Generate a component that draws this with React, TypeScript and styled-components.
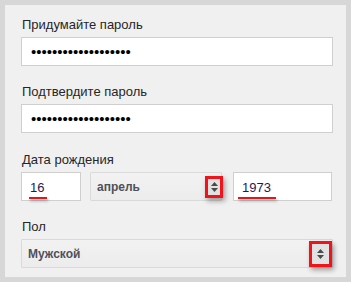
import * as React from "react";
import styled, { createGlobalStyle, css } from "styled-components";

const Global = createGlobalStyle`
  html, body {
    margin: 0;
    padding: 0;
    background: #d7d7d7;
    font-family: "Liberation Sans", Arial, sans-serif;
  }
  * { box-sizing: border-box; }
`;

const Panel = styled.div`
  margin: 5px;
  width: 341px;
  height: 272px;
  background: #f0f0f0;
  padding: 12px 13px 9px 16px;
  display: flex;
  flex-direction: column;
`;

const Group = styled.div<{ $gap?: number }>`
  margin-bottom: ${(p) => p.$gap ?? 18}px;
  &:last-child { margin-bottom: 0; }
`;

const Label = styled.div`
  font-size: 13px;
  line-height: 16px;
  color: #262626;
  margin-bottom: 4px;
  padding-left: 1px;
`;

const TextBox = styled.div<{ $width?: number }>`
  height: 29px;
  width: ${(p) => (p.$width ? `${p.$width}px` : "100%")};
  background: #fff;
  border: 1px solid #cfcfcf;
  display: flex;
  align-items: center;
  padding-left: 8px;
  flex-shrink: 0;
`;

const Dots = styled.span`
  font-size: 15px;
  color: #000;
  line-height: 1;
  padding-left: 1px;
`;

const Value = styled.span`
  position: relative;
  font-size: 13px;
  color: #1d1b55;
  line-height: 15px;
  margin-top: 1px;
  &::after {
    content: "";
    position: absolute;
    left: -1px;
    right: -3px;
    bottom: -4px;
    height: 2px;
    background: #e8141b;
    box-shadow: 1px 2px 3px rgba(0, 0, 0, 0.35);
  }
`;

const YearValue = styled(Value)`
  &::after {
    left: -4px;
    right: -5px;
  }
`;

const Select = styled.div<{ $width?: number }>`
  height: 29px;
  width: ${(p) => (p.$width ? `${p.$width}px` : "100%")};
  background: linear-gradient(#f2f2f2, #ececec);
  border: 1px solid #dadada;
  border-radius: 1px;
  display: flex;
  align-items: center;
  justify-content: space-between;
  padding-left: 6px;
  flex-shrink: 0;
`;

const SelectText = styled.span`
  font-size: 12px;
  font-weight: bold;
  color: #4f5059;
`;

const Marker = styled.span<{ $w: number; $h: number; $shift: number }>`
  ${(p) => css`
    width: ${p.$w}px;
    height: ${p.$h}px;
    margin-right: ${p.$shift}px;
  `}
  border: 3px solid #f0141a;
  background: #e2e2e2;
  box-shadow: 2px 3px 5px rgba(0, 0, 0, 0.35);
  display: flex;
  align-items: center;
  justify-content: center;
`;

const Row = styled.div`
  display: flex;
  align-items: center;
`;

const Arrows = () => (
  <svg width="7" height="10" viewBox="0 0 7 10">
    <path d="M3.5 0 L7 4 L0 4 Z" fill="#4a4a4a" />
    <path d="M0 6 L7 6 L3.5 10 Z" fill="#4a4a4a" />
  </svg>
);

export default function App() {
  return (
    <>
      <Global />
      <Panel>
        <Group>
          <Label>Придумайте пароль</Label>
          <TextBox>
            <Dots>•••••••••••••••••••</Dots>
          </TextBox>
        </Group>
        <Group $gap={19}>
          <Label>Подтвердите пароль</Label>
          <TextBox>
            <Dots>•••••••••••••••••••</Dots>
          </TextBox>
        </Group>
        <Group>
          <Label>Дата рождения</Label>
          <Row>
            <TextBox $width={60}>
              <Value>16</Value>
            </TextBox>
            <Select $width={132} style={{ marginLeft: 9 }}>
              <SelectText>апрель</SelectText>
              <Marker $w={18} $h={22} $shift={-2}>
                <Arrows />
              </Marker>
            </Select>
            <TextBox $width={99} style={{ marginLeft: 11 }}>
              <YearValue>1973</YearValue>
            </TextBox>
          </Row>
        </Group>
        <Group>
          <Label>Пол</Label>
          <Select>
            <SelectText>Мужской</SelectText>
            <Marker $w={23} $h={26} $shift={0}>
              <Arrows />
            </Marker>
          </Select>
        </Group>
      </Panel>
    </>
  );
}
